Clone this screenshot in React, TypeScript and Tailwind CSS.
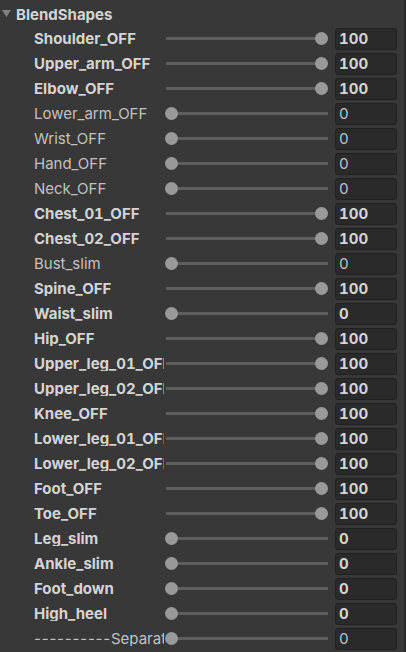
import React from "react";

type Row = { name: string; value: number; bold: boolean; dashes?: string };

const rows: Row[] = [
  { name: "Shoulder_OFF", value: 100, bold: true },
  { name: "Upper_arm_OFF", value: 100, bold: true },
  { name: "Elbow_OFF", value: 100, bold: true },
  { name: "Lower_arm_OFF", value: 0, bold: false },
  { name: "Wrist_OFF", value: 0, bold: false },
  { name: "Hand_OFF", value: 0, bold: false },
  { name: "Neck_OFF", value: 0, bold: false },
  { name: "Chest_01_OFF", value: 100, bold: true },
  { name: "Chest_02_OFF", value: 100, bold: true },
  { name: "Bust_slim", value: 0, bold: false },
  { name: "Spine_OFF", value: 100, bold: true },
  { name: "Waist_slim", value: 0, bold: true },
  { name: "Hip_OFF", value: 100, bold: true },
  { name: "Upper_leg_01_OFF", value: 100, bold: true },
  { name: "Upper_leg_02_OFF", value: 100, bold: true },
  { name: "Knee_OFF", value: 100, bold: true },
  { name: "Lower_leg_01_OFF", value: 100, bold: true },
  { name: "Lower_leg_02_OFF", value: 100, bold: true },
  { name: "Foot_OFF", value: 100, bold: true },
  { name: "Toe_OFF", value: 100, bold: true },
  { name: "Leg_slim", value: 0, bold: true },
  { name: "Ankle_slim", value: 0, bold: true },
  { name: "Foot_down", value: 0, bold: true },
  { name: "High_heel", value: 0, bold: true },
  { name: "Separator", value: 0, bold: false, dashes: "----------" },
];

function SliderRow({ row }: { row: Row }) {
  const textCls = row.bold
    ? "font-bold text-[#d4d4d4]"
    : "font-normal text-[#c2c2c2]";
  return (
    <div className="flex h-[25px] items-center">
      <div className="w-[164px] shrink-0 overflow-hidden pl-[34px]">
        <div className={`whitespace-nowrap text-[15px] leading-none tabular-nums ${textCls}`}>
          {row.dashes && <span className="normal-nums tracking-[0.8px]">{row.dashes}</span>}
          {row.name}
        </div>
      </div>
      <div className="relative h-[25px] w-[164px] shrink-0">
        <div className="absolute left-[2px] right-0 top-[11px] h-[3px] bg-[#5e5e5e]" />
        <div
          className="absolute top-[6px] h-[13px] w-[13px] rounded-full bg-[#999999]"
          style={{ left: row.value === 100 ? 151 : 1 }}
        />
      </div>
      <div className="ml-[7px] flex h-[22px] w-[62px] shrink-0 items-center rounded-[3px] border border-[#212121] bg-[#2a2a2a] pl-[3px]">
        <span className={`text-[15px] leading-none tabular-nums ${textCls}`}>{row.value}</span>
      </div>
    </div>
  );
}

export default function App() {
  return (
    <div
      className="relative h-[652px] w-[406px] overflow-hidden bg-[#383838]"
      style={{ fontFamily: "Inter, 'Noto Sans', sans-serif" }}
    >
      <div className="flex h-[26px] items-center pt-[2px]">
        <svg width="16" height="12" viewBox="0 0 16 12" className="shrink-0">
          <polygon points="2,2 11,2 6.5,9" fill="#808080" />
        </svg>
        <span className="text-[15px] font-bold leading-none text-[#d4d4d4]">BlendShapes</span>
      </div>
      <div className="flex flex-col">
        {rows.map((r) => (
          <SliderRow key={r.name} row={r} />
        ))}
      </div>
      <div className="absolute right-0 top-0 h-full w-[2px] bg-[#2b2b2b]" />
    </div>
  );
}
